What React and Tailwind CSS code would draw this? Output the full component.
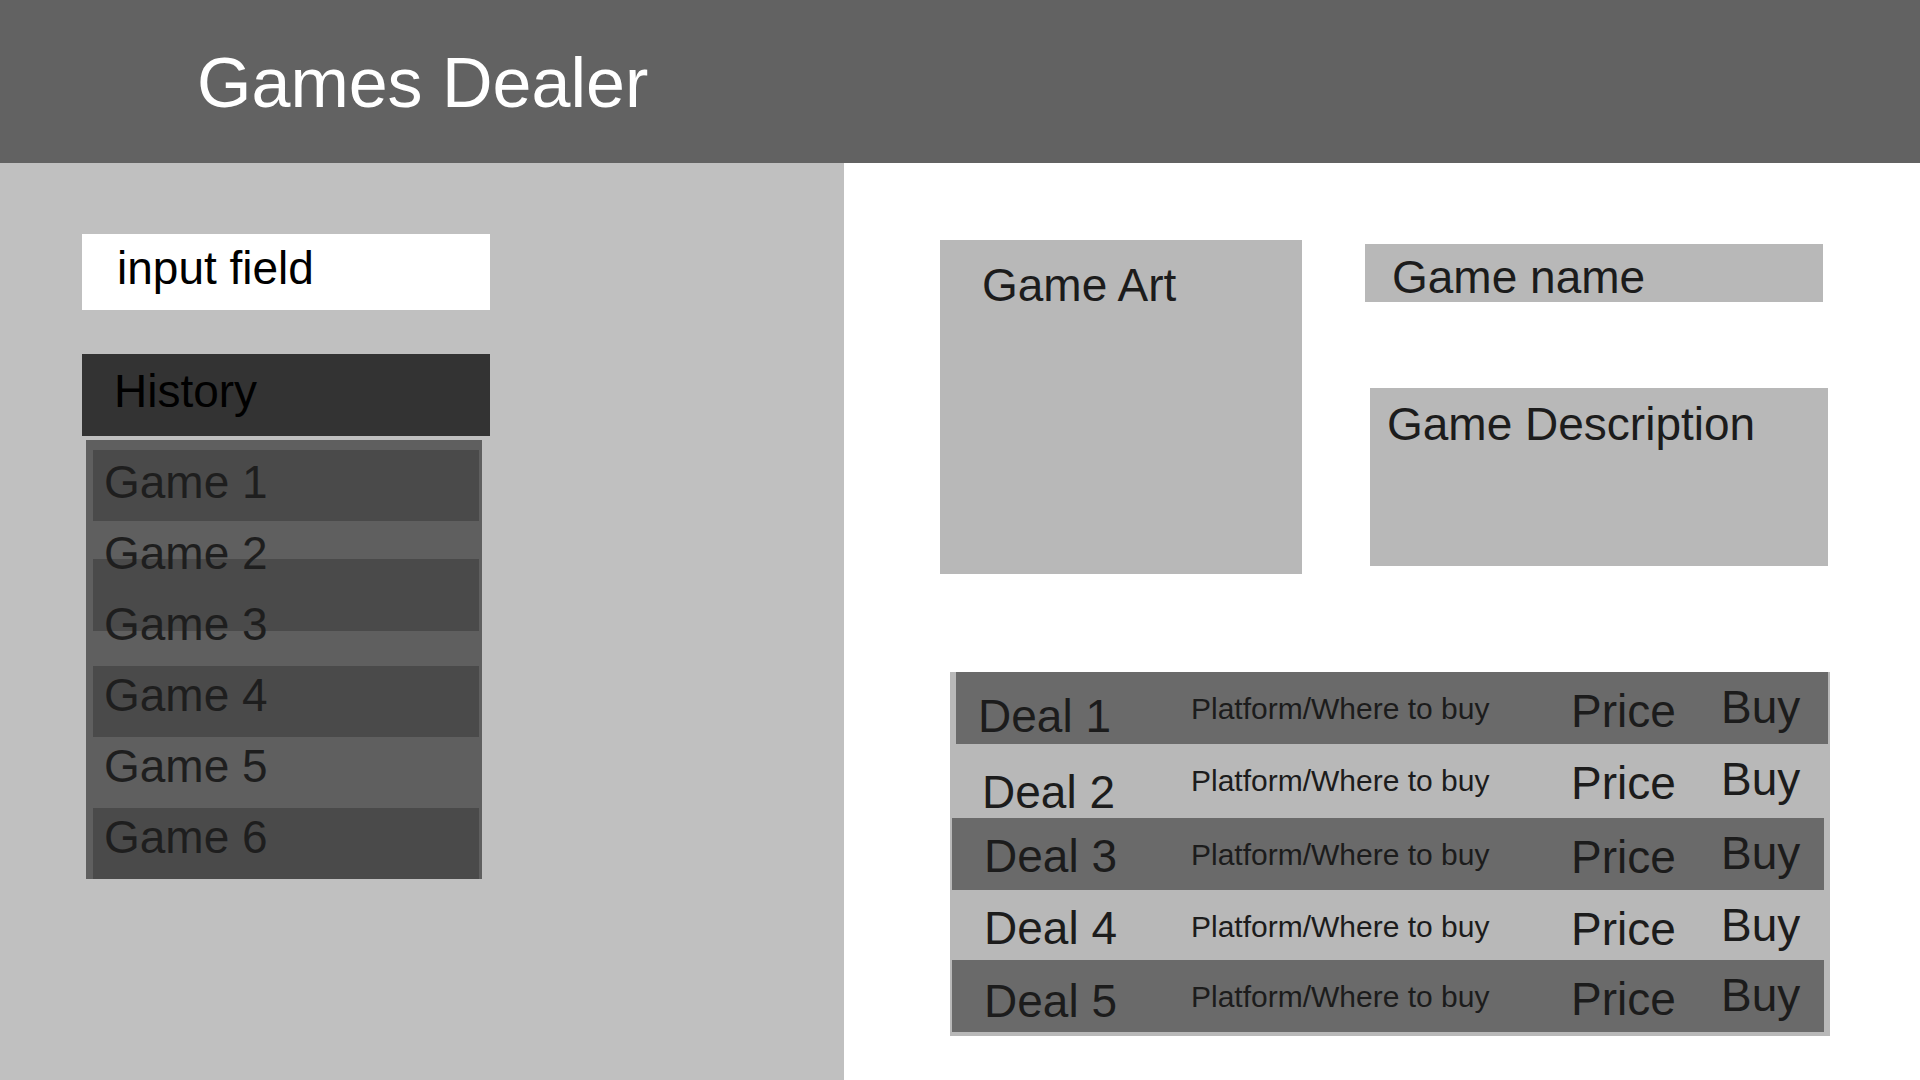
import React from 'react';

const games = ['Game 1', 'Game 2', 'Game 3', 'Game 4', 'Game 5', 'Game 6'];

// stripes behind the history list (they don't line up with the rows in the mockup)
const stripes = [
    'mt-[10px] h-[71px]',
    'mt-[38px] h-[72px]',
    'mt-[35px] h-[71px]',
    'mt-[71px] h-[71px]',
];

const deals = [
    { name: 'Deal 1', row: 'h-[72px] ml-[6px] mr-[2px] bg-[#6a6a6a]', col: 'w-[235px] pl-[22px] pt-[21px]' },
    { name: 'Deal 2', row: 'h-[74px]', col: 'w-[241px] pl-[32px] pt-[25px]' },
    { name: 'Deal 3', row: 'h-[72px] ml-[2px] mr-[6px] bg-[#6a6a6a]', col: 'w-[239px] pl-[32px] pt-[15px]' },
    { name: 'Deal 4', row: 'h-[70px]', col: 'w-[241px] pl-[34px] pt-[15px]' },
    { name: 'Deal 5', row: 'h-[72px] ml-[2px] mr-[6px] bg-[#6a6a6a]', col: 'w-[239px] pl-[32px] pt-[18px]' },
];

export default function App() {
    return (
        <div className="w-[1920px] h-[1080px] flex flex-col overflow-hidden font-['Liberation_Sans',Arial,sans-serif] text-[#1c1c1c]">
            {/* Header */}
            <header className="h-[163px] shrink-0 bg-[#626262] pl-[197px] pt-[48px]">
                <h1 className="text-[70px] leading-none text-white">Games Dealer</h1>
            </header>

            <div className="flex flex-1">
                {/* Left: search + history */}
                <aside className="w-[844px] bg-[#c0c0c0] pl-[82px] pt-[71px]">
                    <div className="w-[408px] h-[76px] bg-white pl-[35px] pt-[11px]">
                        <span className="text-[46px] leading-none text-black">input field</span>
                    </div>

                    <div className="mt-[44px] w-[408px] h-[82px] bg-[#333333] pl-[32px] pt-[14px]">
                        <span className="text-[46px] leading-none text-black">History</span>
                    </div>

                    <div className="mt-[4px] ml-[4px] w-[396px] h-[439px] bg-[#5f5f5f] grid">
                        <div className="col-start-1 row-start-1 flex flex-col pl-[7px] pr-[3px]">
                            {stripes.map((s, i) => (
                                <div key={i} className={`${s} bg-[#4a4a4a]`} />
                            ))}
                        </div>
                        <ul className="col-start-1 row-start-1 pt-[7px] pl-[18px]">
                            {games.map((g) => (
                                <li key={g} className="h-[71px] text-[46px] leading-[71px] text-[#1e1e1e]">
                                    {g}
                                </li>
                            ))}
                        </ul>
                    </div>
                </aside>

                {/* Right: game details + deals */}
                <main className="flex-1 bg-white pl-[96px] pt-[77px]">
                    <div className="flex">
                        <div className="w-[362px] h-[334px] bg-[#b8b8b8] pl-[42px] pt-[22px]">
                            <span className="text-[46px] leading-none">Game Art</span>
                        </div>
                        <div className="flex flex-col">
                            <div className="ml-[63px] mt-[4px] w-[458px] h-[58px] bg-[#b8b8b8] pl-[27px] pt-[10px]">
                                <span className="text-[46px] leading-none">Game name</span>
                            </div>
                            <div className="ml-[68px] mt-[86px] w-[458px] h-[178px] bg-[#b8b8b8] pl-[17px] pt-[13px]">
                                <span className="text-[46px] leading-none">Game Description</span>
                            </div>
                        </div>
                    </div>

                    {/* Deals table */}
                    <div className="ml-[10px] mt-[98px] w-[880px] h-[364px] bg-[#b8b8b8] flex flex-col">
                        {deals.map((d) => (
                            <div key={d.name} className={`flex ${d.row}`}>
                                <div className={`${d.col} text-[46px] leading-none`}>{d.name}</div>
                                <div className="w-[380px] pt-[22px] text-[30px] leading-none">Platform/Where to buy</div>
                                <div className="w-[150px] pt-[16px] text-[46px] leading-none">Price</div>
                                <div className="pt-[12px] text-[46px] leading-none">Buy</div>
                            </div>
                        ))}
                    </div>
                </main>
            </div>
        </div>
    );
}
